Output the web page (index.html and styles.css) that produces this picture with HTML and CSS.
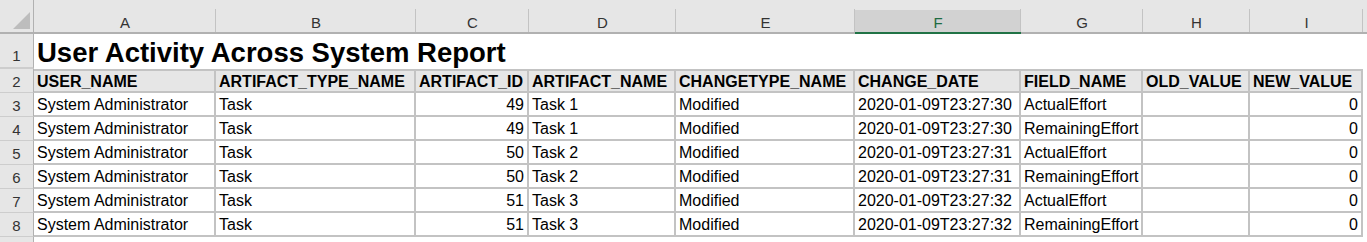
FILE: index.html
```html
<!DOCTYPE html>
<html>
<head>
<meta charset="utf-8">
<link rel="stylesheet" href="styles.css">
</head>
<body>
<div class="sheet">
  <div class="corner"><svg width="17" height="17" viewBox="0 0 17 17"><polygon points="17,0 17,17 0,17" fill="#bdbdbd"/></svg></div>
  <div class="colhead">A</div>
  <div class="colhead">B</div>
  <div class="colhead">C</div>
  <div class="colhead">D</div>
  <div class="colhead">E</div>
  <div class="colhead sel">F</div>
  <div class="colhead">G</div>
  <div class="colhead">H</div>
  <div class="colhead">I</div>
  <div class="colhead fill"></div>

  <div class="rowhead r1">1</div>
  <div class="title">User Activity Across System Report</div>

  <div class="rowhead">2</div>
  <div class="cell hdr">USER_NAME</div>
  <div class="cell hdr">ARTIFACT_TYPE_NAME</div>
  <div class="cell hdr">ARTIFACT_ID</div>
  <div class="cell hdr">ARTIFACT_NAME</div>
  <div class="cell hdr">CHANGETYPE_NAME</div>
  <div class="cell hdr">CHANGE_DATE</div>
  <div class="cell hdr">FIELD_NAME</div>
  <div class="cell hdr">OLD_VALUE</div>
  <div class="cell hdr">NEW_VALUE</div>
  <div class="blank"></div>

  <div class="rowhead">3</div>
  <div class="cell">System Administrator</div><div class="cell">Task</div><div class="cell num">49</div><div class="cell">Task 1</div><div class="cell">Modified</div><div class="cell">2020-01-09T23:27:30</div><div class="cell">ActualEffort</div><div class="cell"></div><div class="cell num">0</div><div class="blank"></div>

  <div class="rowhead">4</div>
  <div class="cell">System Administrator</div><div class="cell">Task</div><div class="cell num">49</div><div class="cell">Task 1</div><div class="cell">Modified</div><div class="cell">2020-01-09T23:27:30</div><div class="cell">RemainingEffort</div><div class="cell"></div><div class="cell num">0</div><div class="blank"></div>

  <div class="rowhead">5</div>
  <div class="cell">System Administrator</div><div class="cell">Task</div><div class="cell num">50</div><div class="cell">Task 2</div><div class="cell">Modified</div><div class="cell">2020-01-09T23:27:31</div><div class="cell">ActualEffort</div><div class="cell"></div><div class="cell num">0</div><div class="blank"></div>

  <div class="rowhead">6</div>
  <div class="cell">System Administrator</div><div class="cell">Task</div><div class="cell num">50</div><div class="cell">Task 2</div><div class="cell">Modified</div><div class="cell">2020-01-09T23:27:31</div><div class="cell">RemainingEffort</div><div class="cell"></div><div class="cell num">0</div><div class="blank"></div>

  <div class="rowhead">7</div>
  <div class="cell">System Administrator</div><div class="cell">Task</div><div class="cell num">51</div><div class="cell">Task 3</div><div class="cell">Modified</div><div class="cell">2020-01-09T23:27:32</div><div class="cell">ActualEffort</div><div class="cell"></div><div class="cell num">0</div><div class="blank"></div>

  <div class="rowhead">8</div>
  <div class="cell">System Administrator</div><div class="cell">Task</div><div class="cell num">51</div><div class="cell">Task 3</div><div class="cell">Modified</div><div class="cell">2020-01-09T23:27:32</div><div class="cell">RemainingEffort</div><div class="cell"></div><div class="cell num">0</div><div class="blank"></div>

  <div class="rowhead tail"></div>
  <div class="tailfill"></div>
</div>
</body>
</html>
```
FILE: styles.css
```css
html, body {
  margin: 0;
  padding: 0;
  background: #ffffff;
}
body {
  width: 1367px;
  height: 242px;
  overflow: hidden;
  font-family: "Liberation Sans", Arial, sans-serif;
}
.sheet {
  display: grid;
  grid-template-columns: 34px 182px 200px 113px 147px 179px 166px 122px 107px 113px 1fr;
  grid-template-rows: 34px 35px 24px repeat(6, 24px) 1fr;
  height: 242px;
}
.corner {
  background: #e6e6e6;
  border-bottom: 2px solid #b1b1b1;
  border-right: 1px solid #b1b1b1;
  box-sizing: border-box;
  display: flex;
  align-items: flex-end;
  justify-content: flex-end;
  padding: 0 3px 3px 0;
}
.corner svg { display: block; }
.colhead {
  box-sizing: border-box;
  background: linear-gradient(to left, #c3c3c3 1px, transparent 1px) no-repeat right bottom / 100% 23px, #e6e6e6;
  border-bottom: 2px solid #b1b1b1;
  display: flex;
  align-items: flex-end;
  justify-content: center;
  padding-bottom: 1px;
  font-size: 15px;
  color: #333333;
  line-height: 17px;
}
.colhead.sel {
  background: linear-gradient(to left, #c3c3c3 1px, transparent 1px) no-repeat right bottom / 100% 23px, linear-gradient(#e6e6e6, #e6e6e6) no-repeat left top / 100% 10px, #d2d2d2;
  border-bottom-color: #217346;
  color: #1e6b41;
}
.colhead.fill {
  background: #e6e6e6;
}
.rowhead {
  box-sizing: border-box;
  background: #e6e6e6;
  border-right: 1px solid #b1b1b1;
  border-bottom: 1px solid #cdcdcd;
  display: flex;
  align-items: center;
  justify-content: center;
  padding-top: 1px;
  font-size: 15px;
  color: #333333;
}
.rowhead.r1 {
  align-items: flex-end;
  padding-bottom: 3px;
  border-bottom: 2px solid #cdcdcd;
}
.rowhead.tail {
  border-bottom: none;
}
.title {
  grid-column: 2 / -1;
  box-sizing: border-box;
  display: flex;
  align-items: flex-end;
  padding: 0 0 1px 3px;
  font-size: 27.5px;
  font-weight: bold;
  line-height: 31px;
  color: #000000;
  white-space: nowrap;
}
.cell {
  box-sizing: border-box;
  border-right: 2px solid #c3c3c3;
  border-bottom: 2px solid #c3c3c3;
  display: flex;
  align-items: center;
  padding: 1px 3px 0 3px;
  font-size: 16px;
  color: #000000;
  white-space: nowrap;
  overflow: hidden;
  line-height: 18px;
}
.cell.hdr {
  background: #e6e6e6;
  border-top: 2px solid #c3c3c3;
  font-weight: bold;
}
.cell.num {
  justify-content: flex-end;
}
.blank {
  background: #ffffff;
}
.tailfill {
  grid-column: 2 / -1;
  background: #ffffff;
}
```
